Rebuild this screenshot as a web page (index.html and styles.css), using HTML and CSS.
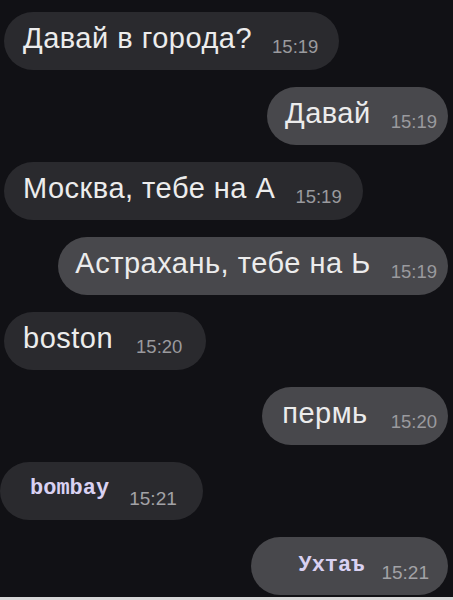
FILE: index.html
```html
<!DOCTYPE html>
<html>
<head>
    <meta charset="utf-8">
    <title>Города</title>
    <link rel="stylesheet" href="styles.css">
</head>
<body>

<!-- the chat itself: one row for each message -->
<section id="chat">
    <div class="row in">
        <div class="bubble"><span class="msg">Давай в города?</span><span class="time">15:19</span></div>
    </div>
    <div class="row out">
        <div class="bubble"><span class="msg">Давай</span><span class="time">15:19</span></div>
    </div>
    <div class="row in">
        <div class="bubble"><span class="msg">Москва, тебе на А</span><span class="time">15:19</span></div>
    </div>
    <div class="row out">
        <div class="bubble wide"><span class="msg">Астрахань, тебе на Ь</span><span class="time">15:19</span></div>
    </div>
    <div class="row in">
        <div class="bubble short"><span class="msg">boston</span><span class="time">15:20</span></div>
    </div>
    <div class="row out">
        <div class="bubble short"><span class="msg">пермь</span><span class="time">15:20</span></div>
    </div>
    <div class="row in edge">
        <div class="bubble mono"><span class="msg">bombay</span><span class="time">15:21</span></div>
    </div>
    <div class="row out">
        <div class="bubble mono last"><span class="msg">Ухтаъ</span><span class="time">15:21</span></div>
    </div>
</section>

<div class="bottomline"></div>

</body>
</html>
```

FILE: styles.css
```css
body {
    margin: 0;
    height: 600px;
    overflow: hidden;
    background: #111115;
    font-family: "Liberation Sans", Arial, Helvetica, sans-serif;
    position: relative;
}

/* the list of messages */
#chat {
    display: flex;
    flex-direction: column;
    gap: 17px;
    padding: 12px 5px 0 4px;
}

.row {
    display: flex;
}

.row.in {
    justify-content: flex-start;
}

.row.out {
    justify-content: flex-end;
}

.row.edge {
    margin-left: -4px;   /* bombay bubble touches the left side */
}

/* one message */
.bubble {
    display: flex;
    align-items: center;
    height: 58px;
    border-radius: 29px;
    padding: 0 21px 0 19px;
    background: #2a2a2e;
    color: #ececec;
}

.out .bubble {
    background: #48484c;
    padding: 0 11px 0 18px;
}

.out .bubble.wide {
    padding-left: 17px;
}

.bubble.short .time {
    margin-left: 23px;
}

.in .bubble.short {
    padding-right: 24px;
}

.out .bubble.short {
    padding-left: 20px;
}

.msg {
    font-size: 29px;
    letter-spacing: 0.5px;
    line-height: 1;
    margin-bottom: 6px;
    white-space: nowrap;
}

.time {
    font-size: 18.5px;
    line-height: 1;
    color: #9a9a9e;
    margin-left: 20px;
    margin-top: 12px;
}

/* the two messages typed in a typewriter font */
.bubble.mono {
    padding-left: 30px;
    padding-right: 26px;
}

.bubble.mono .msg {
    font-family: "Liberation Mono", "Courier New", monospace;
    font-weight: bold;
    font-size: 22px;
    letter-spacing: 0;
    color: #d9d1f2;
    margin-bottom: 4px;
}

.bubble.mono .time {
    color: #a2a2a6;
    font-size: 19px;
    margin-top: 14px;
}

.out .bubble.last {
    padding-left: 47px;
    padding-right: 19px;
}

.out .bubble.last .msg {
    margin-bottom: 0;
}

.out .bubble.last .time {
    margin-left: 17px;
    margin-top: 12px;
}

/* light strip at the very bottom of the picture */
.bottomline {
    position: absolute;
    left: 0;
    right: 0;
    bottom: 0;
    height: 3px;
    background: #d8d8d8;
}
```
